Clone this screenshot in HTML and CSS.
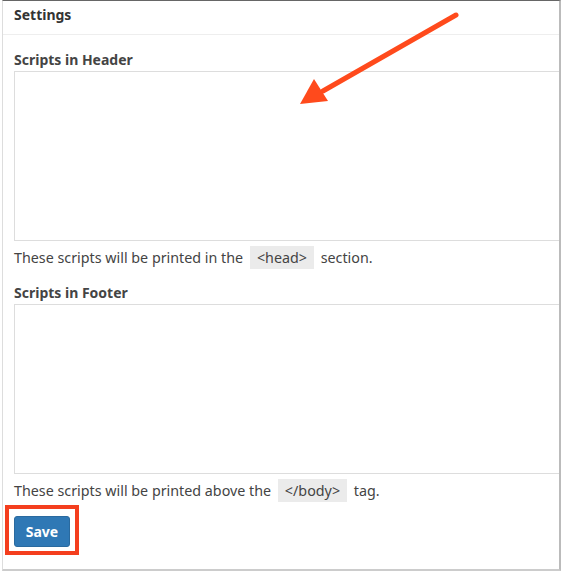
FILE: index.html
```html
<!DOCTYPE html>
<html>
<head>
<meta charset="utf-8">
<link rel="stylesheet" href="styles.css">
</head>
<body>
<div class="frame">
  <div class="title">Settings</div>
  <div class="body">
    <div class="label">Scripts in Header</div>
    <div class="area area-head"></div>
    <p class="desc">These scripts will be printed in the <code>&lt;head&gt;</code> section.</p>
    <div class="label">Scripts in Footer</div>
    <div class="area area-foot"></div>
    <p class="desc">These scripts will be printed above the <code>&lt;/body&gt;</code> tag.</p>
    <div class="highlight"><button class="save">Save</button></div>
  </div>
  <svg class="arrow" width="562" height="140" viewBox="0 0 562 140">
    <line x1="455" y1="15" x2="322" y2="91" stroke="#ff4a1c" stroke-width="5" stroke-linecap="round"/>
    <polygon points="299,104 313,79 327,101" fill="#ff4a1c"/>
  </svg>
</div>
</body>
</html>
```
FILE: styles.css
```css
html, body { margin: 0; padding: 0; background: #fff; }
body { font-family: "Noto Sans", "Open Sans", sans-serif; color: #444; }
.frame {
  position: relative;
  margin-left: 2px;
  width: 556px;
  height: 568px;
  border-top: 1px solid #666;
  border-left: 1px solid #ddd;
  border-right: 2px solid #bbb;
  border-bottom: 2px solid #ccc;
  overflow: hidden;
}
.title {
  height: 33px;
  line-height: 28px;
  padding-left: 11px;
  font-size: 14px;
  font-weight: 700;
  color: #333;
  border-bottom: 1px solid #eee;
}
.body { padding-left: 11px; }
.label {
  margin-top: 13px;
  font-size: 14px;
  font-weight: 700;
  color: #444;
  line-height: 20px;
}
.body > .label:first-child { margin-top: 15px; }
.area {
  margin-top: 1px;
  width: 570px;
  border: 1px solid #ddd;
  box-sizing: border-box;
}
.area-head { height: 170px; }
.area-foot { height: 170px; }
.desc {
  margin: 5px 0 0;
  font-size: 14.3px;
  line-height: 24px;
  color: #444;
}
.desc code {
  font-family: "Noto Sans", sans-serif;
  background: #ebebeb;
  padding: 2px 7px;
  margin: 0 3px;
}
.highlight {
  margin-top: 2px;
  margin-left: -9px;
  width: 66px;
  height: 40px;
  padding-top: 2px;
  border: 4px solid #f43e1e;
  display: flex;
  align-items: center;
  justify-content: center;
}
.save {
  width: 56px;
  height: 31px;
  background: #2f78b5;
  border: 1px solid #2a6a9f;
  border-radius: 3px;
  color: #fff;
  font-family: "Noto Sans", sans-serif;
  font-weight: 700;
  font-size: 14px;
  padding: 0;
}
.arrow { position: absolute; left: -2px; top: -1px; pointer-events: none; }
```
